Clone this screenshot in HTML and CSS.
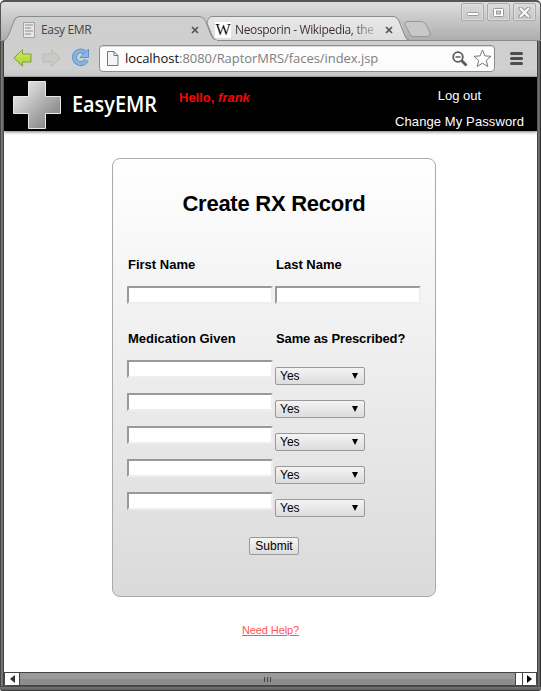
FILE: index.html
```html
<!DOCTYPE html>
<html lang="en">
<head>
<meta charset="utf-8">
<title>Easy EMR</title>
<link rel="stylesheet" href="styles.css">
</head>
<body>
<div class="window">
  <div class="tabstrip">
    <svg class="tab-shapes" width="541" height="41" viewBox="0 0 541 41">
      <defs>
        <linearGradient id="tabFill" x1="0" y1="0" x2="0" y2="1"><stop offset="0" stop-color="#d0d0d0"/><stop offset="1" stop-color="#cecece"/></linearGradient>
        <linearGradient id="idleFill" x1="0" y1="0" x2="0" y2="1"><stop offset="0" stop-color="#e8e8e8"/><stop offset="1" stop-color="#dedede"/></linearGradient>
      </defs>
      <path d="M0 40.5H541" stroke="#8b8b8b"/>
      <path d="M207 23Q208 17 212 16.500H394Q397 17 399 21L405 36Q406 40 410 40.500H216Q213 39 211 33Z" fill="url(#idleFill)" stroke="#8b8b8b"/>
      <path d="M4 42V41Q7 39 9 34L14 21Q15 17 19 16.500H200Q204 17 206 22L211 35Q213 40 218 40.500V42Z" fill="url(#tabFill)" stroke="#8b8b8b"/>
      <path d="M5 41H217" stroke="#cecece" stroke-width="2"/>
      <path d="M407 21.500H422Q425 22 427 26L430 33Q431 36 428 36.500H413Q410 36 409 32L405 25Q404 22 407 21.500Z" fill="#c8c8c8" stroke="#989898"/>
    </svg>
    <div class="tab tab-one">
      <svg width="13" height="17" viewBox="0 0 13 17"><path d="M.5.5h11v15H.5z" fill="#e8e8e8" stroke="#a2a2a2"/><path d="M2 3h8M2 6h6M2 9h8M2 12h6" stroke="#aaa" stroke-width="1.500"/></svg>
      <span class="tab-title">Easy EMR</span>
      <svg class="tab-close" width="8" height="8" viewBox="0 0 8 8"><path d="M1 1l6 6M7 1L1 7" stroke="#555" stroke-width="1.700"/></svg>
    </div>
    <div class="tab tab-two">
      <span class="wiki">W</span>
      <span class="tab-title faded">Neosporin - Wikipedia, the</span>
      <svg class="tab-close" width="8" height="8" viewBox="0 0 8 8"><path d="M1 1l6 6M7 1L1 7" stroke="#555" stroke-width="1.700"/></svg>
    </div>
    <div class="controls">
      <div class="control"><svg width="13" height="11"><rect x="1.500" y="5.500" width="11" height="3" rx="1" fill="#fff" stroke="#999"/></svg></div>
      <div class="control"><svg width="13" height="11"><rect x="1.500" y="1.500" width="10" height="8" rx="1" fill="#fff" stroke="#999"/><rect x="4.500" y="4" width="4" height="3" fill="#ccc" stroke="#999"/></svg></div>
      <div class="control"><svg width="13" height="11"><path d="M2.500 1.500l8 8M10.500 1.500l-8 8" stroke="#999" stroke-width="4" stroke-linecap="round"/><path d="M2.500 1.500l8 8M10.500 1.500l-8 8" stroke="#fff" stroke-width="2" stroke-linecap="round"/></svg></div>
    </div>
  </div>

  <div class="toolbar">
    <svg class="nav" width="19" height="18" viewBox="0 0 19 18"><defs><linearGradient id="g" x1="0" y1="0" x2="0" y2="1"><stop offset="0" stop-color="#d5ea6b"/><stop offset="1" stop-color="#a6cf2c"/></linearGradient></defs><path d="M.8 9L9.500.8V5H18v8H9.500v4.200z" fill="url(#g)" stroke="#79a33b" stroke-linejoin="round"/></svg>
    <svg class="nav" width="19" height="18" viewBox="0 0 19 18"><path d="M18.200 9L9.500.8V5H1v8h8.500v4.200z" fill="#c9c9c6" stroke="#b9b9b6" stroke-linejoin="round"/></svg>
    <svg class="nav reload" width="19" height="19" viewBox="0 0 19 19"><path d="M13.500 4.200A6.300 6.300 0 1 0 15.500 12" fill="none" stroke="#5f94ca" stroke-width="5"/><path d="M17.500 1v8.500H9z" fill="#8ab7e2" stroke="#5f94ca" stroke-linejoin="round"/><path d="M13.500 4.200A6.300 6.300 0 1 0 15.300 12.400" fill="none" stroke="#86b4e0" stroke-width="3.200"/></svg>
    <div class="omnibox">
      <svg class="page-icon" width="12" height="15" viewBox="0 0 12 15"><path d="M.5.5h6.500l4 4v10H.5zM7 .5v4h4" fill="#f4f4f4" stroke="#777"/></svg>
      <span class="url"><b>localhost</b>:8080/RaptorMRS/faces/index.jsp</span>
      <svg class="mag" width="16" height="16" viewBox="0 0 16 16"><circle cx="6" cy="6" r="4.800" fill="#fff" stroke="#5b5b5b" stroke-width="1.800"/><path d="M3.500 6h5" stroke="#5b5b5b" stroke-width="1.500"/><path d="M9.500 9.500L14.500 14.500" stroke="#5b5b5b" stroke-width="2.800"/></svg>
      <svg class="star" width="19" height="19" viewBox="0 0 19 19"><path d="M9.500 1l2.400 5.900 6.100.4-4.700 4 1.500 6.200-5.300-3.400-5.300 3.400 1.500-6.200L1 7.300l6.100-.4z" fill="#fff" stroke="#777" stroke-linejoin="round"/></svg>
    </div>
    <svg class="menu" width="13" height="13" viewBox="0 0 13 13"><path d="M1.500 1.500h10M1.500 6.500h10M1.500 11.500h10" stroke="#4d4d4d" stroke-width="3" stroke-linecap="round"/></svg>
  </div>

  <div class="page">
    <header class="header">
      <svg class="cross" width="48" height="48" viewBox="0 0 48 48"><defs><linearGradient id="c" x1="0" y1="0" x2="1" y2="1"><stop offset=".1" stop-color="#e8e8e8"/><stop offset=".9" stop-color="#808080"/></linearGradient></defs><path d="M15.500.5h17v15h15v17h-15v15h-17v-15H.5v-17h15z" fill="url(#c)" stroke="#e8e8e8"/></svg>
      <svg class="brand" width="92" height="34"><text x="0" y="22" textLength="85" lengthAdjust="spacingAndGlyphs">EasyEMR</text></svg>
      <div class="hello">Hello, <i>frank</i></div>
      <nav class="links"><a>Log out</a><a class="wide">Change My Password</a></nav>
    </header>

    <main class="card">
      <h1>Create RX Record</h1>
      <div class="grid labels"><label>First Name</label><label>Last Name</label></div>
      <div class="grid names"><input type="text"><input type="text"></div>
      <div class="grid labels second"><label>Medication Given</label><label class="tight">Same as Prescribed?</label></div>
      <div class="rows">
        <div class="grid row"><input type="text"><div class="select"><span>Yes</span><i class="arrow"></i></div></div>
        <div class="grid row"><input type="text"><div class="select"><span>Yes</span><i class="arrow"></i></div></div>
        <div class="grid row"><input type="text"><div class="select"><span>Yes</span><i class="arrow"></i></div></div>
        <div class="grid row"><input type="text"><div class="select"><span>Yes</span><i class="arrow"></i></div></div>
        <div class="grid row"><input type="text"><div class="select"><span>Yes</span><i class="arrow"></i></div></div>
      </div>
      <button class="submit">Submit</button>
    </main>
    <a class="help">Need Help?</a>
  </div>

  <div class="scrollbar">
    <div class="sb-btn"><svg width="5" height="8"><path d="M5 0v8L0 4z" fill="#333"/></svg></div>
    <div class="thumb"><i></i><i></i><i></i></div>
    <div class="gap"></div>
    <div class="sb-btn right"><svg width="5" height="8"><path d="M0 0v8l5-4z" fill="#000"/></svg></div>
  </div>
</div>
</body>
</html>
```
FILE: styles.css
```css
* { box-sizing: border-box; }
html { background: #fff; }
body { margin: 0; width: 541px; height: 691px; overflow: hidden; font-family: "Liberation Sans", Arial, sans-serif; }
.window {
  position: relative;
  width: 541px; height: 691px;
  display: flex; flex-direction: column;
  padding: 0 4px 5px;
  background: linear-gradient(to right, #444 1px, #85817e 1px, #68645f 3px, #444 3px, #444 4px, transparent 4px, transparent 537px, #444 537px, #444 538px, #777 538px, #5c5c5c 540px, #333 540px), linear-gradient(#ddd, #555);
  border-radius: 5px 5px 3px 3px;
  overflow: hidden;
}
.window::after {
  content: ""; position: absolute; left: 0; right: 0; bottom: 0; height: 5px;
  background: linear-gradient(#4a4a4a 1px, #777 1px, #5c5c5c 4px, #3a3a3a 4px);
}
.tabstrip {
  position: relative;
  height: 41px; margin: 0 -4px; flex: none;
  display: flex;
  background: linear-gradient(#dedede, #acacac);
  border: solid #555; border-width: 2px 1px 0;
  border-radius: 5px 5px 0 0;
}
.tab-shapes { position: absolute; left: -1px; top: -2px; }
.tab { position: relative; height: 22px; margin-top: 17px; display: flex; align-items: center; flex: none; font: 12px/22px "Open Sans", "Noto Sans", sans-serif; letter-spacing: -.35px; color: #444; }
.tab-one { width: 179px; margin-left: 22px; }
.tab-two { width: 181px; margin-left: 13px; }
.tab-title { margin-left: 5px; white-space: nowrap; }
.tab-close { margin-left: auto; margin-right: 3px; }
.wiki { width: 16px; height: 16px; background: #fff; color: #111; font: 16px/16px "Liberation Serif", serif; letter-spacing: 0; display: flex; justify-content: center; }
.faded { padding-right: 2px; margin-left: 4px; color: transparent; background: linear-gradient(to right, #3c2c2c 115px, #c9c9c9 143px); background-clip: text; -webkit-background-clip: text; }
.controls { position: relative; display: flex; gap: 3px; margin: 1px 4px 0 auto; }
.control { width: 23px; height: 18px; border: 1px solid #aaa; border-radius: 2px; box-shadow: inset 0 0 0 1px #ddd; display: flex; align-items: center; justify-content: center; }
.toolbar { height: 36px; flex: none; display: flex; align-items: flex-start; background: linear-gradient(#cecece, #d0d0d0 80%, #c6c6c6); border-bottom: 1px solid #aaa; padding: 4px 0 0 9px; }
.nav { margin: 4px 10px 0 0; flex: none; }
.reload { margin: 3px 9px 0 0; }
.omnibox { width: 396px; height: 27px; flex: none; display: flex; align-items: center; border: 1px solid #8c8c8c; border-radius: 4px; background: #fcfcfc; box-shadow: inset 0 1px #ddd; padding: 0 2px 0 7px; }
.url { margin-left: 6px; font: 13px/25px "Open Sans", "Noto Sans", sans-serif; letter-spacing: -.05px; color: #808080; white-space: nowrap; }
.url b { font-weight: 400; color: #111; }
.mag { margin-left: auto; margin-right: 5px; }
.menu { margin: 7px 0 0 15px; }
.page { height: 595px; flex: none; background: #fff; display: flex; flex-direction: column; align-items: center; }
.header { width: 533px; height: 54px; flex: none; background: #000; box-shadow: 0 1px 3px #777; display: flex; align-items: flex-start; }
.cross { margin: 4px 0 0 9px; }
.brand { margin: 13px 0 0 11px; }
.brand text { font: 600 21px "Open Sans", sans-serif; fill: #fff; }
.hello { margin: 13px 0 0 15px; font: bold 13px/15px "Liberation Sans", sans-serif; color: #f00; }
.links { margin: 11px 13px 0 auto; display: flex; flex-direction: column; align-items: center; gap: 11px; color: #fff; font-size: 13px; line-height: 15px; }
.wide { letter-spacing: .1px; }
.card { width: 324px; height: 439px; margin: 27px 0 0 7px; border: 1px solid #aaa; border-radius: 8px; background: linear-gradient(#fff, #dadada); padding: 0 14px; display: flex; flex-direction: column; align-items: stretch; }
h1 { margin: 32px 0 0; text-align: center; font-size: 22px; line-height: 26px; letter-spacing: -.25px; }
.grid { display: grid; grid-template-columns: 146px 146px; column-gap: 2px; }
.labels { margin-top: 40px; font-weight: bold; font-size: 13px; line-height: 15px; padding-left: 1px; }
.tight { letter-spacing: -.12px; }
.names { margin-top: 14px; }
.second { margin-top: 27px; }
input { width: 146px; height: 18px; margin: 0; padding: 0; border: 2px solid; border-color: #999 #eee #eee #999; background: #fff; border-radius: 0; }
.rows { margin-top: 14px; }
.row { height: 33px; align-items: start; }
.select { width: 90px; height: 18px; margin-top: 7px; border: 1px solid #999; border-radius: 2px; background: linear-gradient(#f4f4f4, #dcdcdc); font-size: 12px; line-height: 16px; display: flex; align-items: center; justify-content: space-between; padding: 0 6px 0 4px; }
.arrow { border: solid transparent; border-width: 6px 3px 0; border-top-color: #000; }
.submit { width: 50px; height: 18px; margin: 12px 0 0 122px; padding: 0; border: 1px solid #999; border-radius: 2px; background: linear-gradient(#f4f4f4, #dcdcdc); font: 12px/16px "Liberation Sans", sans-serif; color: #000; }
.help { margin: 26px 0 0; font-size: 11px; line-height: 14px; letter-spacing: -.1px; color: #f55; text-decoration: underline; }
.scrollbar { height: 14px; flex: none; display: flex; background: #fff; border: 1px solid #444; border-radius: 0 0 3px 3px; }
.sb-btn { width: 14px; display: flex; align-items: center; justify-content: center; background: #fff; }
.sb-btn.right { border-left: 1px solid #444; }
.thumb { flex: 1; display: flex; align-items: center; justify-content: center; gap: 2px; border: solid #444; border-width: 0 1px; background: linear-gradient(#999 50%, #8c8c8c 50%); }
.thumb i { width: 1px; height: 5px; background: #444; }
.gap { width: 6px; }
```
